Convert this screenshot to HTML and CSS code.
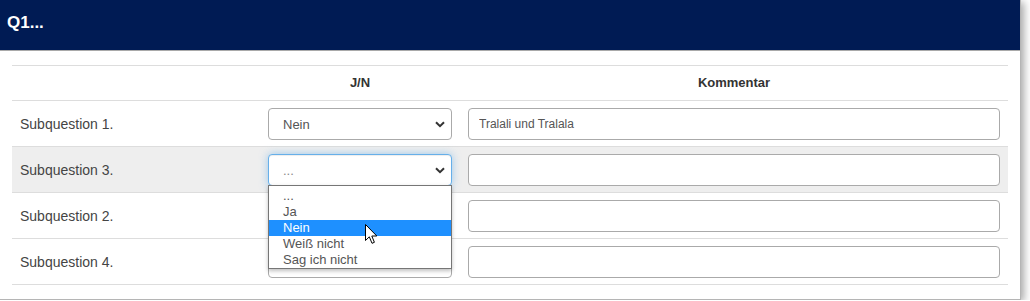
FILE: index.html
```html
<!DOCTYPE html>
<html lang="de">
<head>
  <meta charset="UTF-8">
  <title>Q1</title>
  <link rel="stylesheet" href="styles.css">
</head>
<body>

  <div class="panel">
    <div class="panel-heading">Q1...</div>
    <div class="panel-body">
      <table class="matrix">
        <colgroup>
          <col class="col-label">
          <col class="col-answer">
          <col class="col-comment">
        </colgroup>
        <thead>
          <tr>
            <th></th>
            <th>J/N</th>
            <th>Kommentar</th>
          </tr>
        </thead>
        <tbody>
          <tr>
            <td class="label">Subquestion 1.</td>
            <td>
              <div class="select">
                <span>Nein</span>
                <svg class="chevron" width="10" height="7" viewBox="0 0 10 7"><path d="M1 1.2 L5 5.2 L9 1.2" fill="none" stroke="#333" stroke-width="2"/></svg>
              </div>
            </td>
            <td><input type="text" class="text" value="Tralali und Tralala"></td>
          </tr>
          <tr class="hover">
            <td class="label">Subquestion 3.</td>
            <td>
              <div class="dropwrap">
                <div class="select focus">
                  <span>...</span>
                  <svg class="chevron" width="10" height="7" viewBox="0 0 10 7"><path d="M1 1.2 L5 5.2 L9 1.2" fill="none" stroke="#333" stroke-width="2"/></svg>
                </div>
                <ul class="options">
                  <li>...</li>
                  <li>Ja</li>
                  <li class="active">Nein</li>
                  <li>Weiß nicht</li>
                  <li>Sag ich nicht</li>
                </ul>
              </div>
            </td>
            <td><input type="text" class="text" value=""></td>
          </tr>
          <tr>
            <td class="label">Subquestion 2.</td>
            <td>
              <div class="select">
                <span></span>
                <svg class="chevron" width="10" height="7" viewBox="0 0 10 7"><path d="M1 1.2 L5 5.2 L9 1.2" fill="none" stroke="#333" stroke-width="2"/></svg>
              </div>
            </td>
            <td><input type="text" class="text" value=""></td>
          </tr>
          <tr>
            <td class="label">Subquestion 4.</td>
            <td>
              <div class="select">
                <span></span>
                <svg class="chevron" width="10" height="7" viewBox="0 0 10 7"><path d="M1 1.2 L5 5.2 L9 1.2" fill="none" stroke="#333" stroke-width="2"/></svg>
              </div>
            </td>
            <td><input type="text" class="text" value=""></td>
          </tr>
        </tbody>
      </table>
    </div>
  </div>

  <!-- mouse pointer over the open list -->
  <svg class="cursor" width="13" height="21" viewBox="0 0 13 21">
    <path d="M0.5 0.5 L0.5 16.5 L4.3 12.8 L7 19.3 L9.4 18.3 L6.8 12 L11.8 12 Z" fill="#fff" stroke="#000" stroke-width="1" stroke-linejoin="round"/>
  </svg>

</body>
</html>
```

FILE: styles.css
```css
body { margin: 0; background: #fff; font-family: "Liberation Sans", Arial, sans-serif; color: #333; }

.panel { position: relative; width: 1021px; height: 300px; box-sizing: border-box; background: #fff; border-right: 1px solid #b5b5b5; border-bottom: 1px solid #b5b5b5; box-shadow: 3px 2px 8px rgba(0,0,0,0.35); }
.panel-heading { height: 51px; box-sizing: border-box; padding: 0 7px 4px; display: flex; align-items: center; background: #001b54; color: #fff; font-size: 17px; font-weight: bold; border-bottom: 1px solid #a9a9a9; }
.panel-body { padding: 14px 13px 0 12px; }

.matrix { width: 996px; border-collapse: collapse; table-layout: fixed; border-bottom: 1px solid #ddd; }
.col-label { width: 248px; }
.col-answer { width: 200px; }
.col-comment { width: 548px; }
.matrix th { border-top: 1px solid #ddd; padding: 9px 8px; line-height: 16px; font-size: 13px; font-weight: bold; text-align: center; color: #333; }
.matrix td { border-top: 1px solid #ddd; padding: 7px 8px 6px; vertical-align: middle; }
.matrix td.label { font-size: 14px; color: #444; }
.matrix tr.hover td { background: #eee; }

.select { height: 32px; box-sizing: border-box; display: flex; align-items: center; justify-content: space-between; padding: 0 6px 0 14px; background: #fff; border: 1px solid #aaa; border-radius: 4px; font-size: 13px; color: #555; }
.select.focus { border-color: #66afe9; box-shadow: inset 0 1px 1px rgba(0,0,0,0.075), 0 0 8px rgba(102,175,233,0.6); }
.select.focus span { color: #888; }
.chevron { display: block; }

.text { display: block; width: 100%; height: 32px; box-sizing: border-box; margin: 0; padding: 0 10px; border: 1px solid #aaa; border-radius: 4px; font-family: "Liberation Sans", Arial, sans-serif; font-size: 12px; color: #555; background: #fff; outline: none; }

.dropwrap { position: relative; }
.options { position: absolute; left: 0; right: 0; top: 31px; z-index: 2; margin: 0; padding: 2px 0 0; list-style: none; background: #fff; border: 1px solid #767676; box-shadow: 0 2px 4px rgba(0,0,0,0.25); font-size: 13px; color: #555; }
.options li { height: 16px; line-height: 16px; padding-left: 14px; }
.options li.active { background: #1e90ff; color: #fff; }

.cursor { position: absolute; left: 365px; top: 224px; z-index: 5; }
```
